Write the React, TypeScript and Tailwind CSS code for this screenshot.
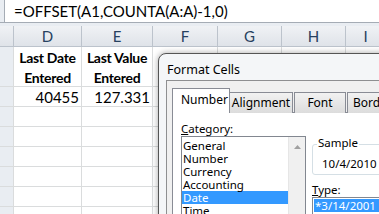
import React from "react";

const cols = ["", "D", "E", "F", "G", "H", "I"];
const widths = "14px 68px 71px 65px 64px 64px 40px";

export default function App() {
  const rows = 7;
  return (
    <div className="relative w-[379px] h-[214px] overflow-hidden bg-white" style={{ fontFamily: "Lato, 'Liberation Sans', sans-serif" }}>
      {/* formula bar */}
      <div className="flex h-[23px] bg-[#e9edf2] border-b border-[#a5acb5]">
        <div className="w-[5px] border-r border-[#a5acb5]" />
        <div className="flex-1 bg-white pl-[9px] text-[15px] leading-[22px] text-black">=OFFSET(A1,COUNTA(A:A)-1,0)</div>
      </div>
      <div className="h-[3px] bg-[#e9edf2]" />
      {/* grid */}
      <div className="grid" style={{ gridTemplateColumns: widths }}>
        {cols.map((c, i) => (
          <div key={"h" + i} className="h-[21px] bg-gradient-to-b from-[#f0f2f5] to-[#dfe3e9] border-r border-b border-[#bcc3cc] text-center text-[15px] leading-[21px] text-[#27415f]">{c}</div>
        ))}
        {cols.map((c, i) => (
          <div key={"r1" + i} className={`h-[40px] border-r border-b border-[#dadcdd] ${i === 0 ? "bg-[#e9edf2] border-[#bcc3cc]" : ""} text-center font-bold text-[14px] tracking-[-0.3px] leading-[20px] pt-[1px] text-black`}>
            {i === 1 && (<><div>Last Date</div><div>Entered</div></>)}
            {i === 2 && (<><div>Last Value</div><div>Entered</div></>)}
          </div>
        ))}
        {cols.map((c, i) => (
          <div key={"r2" + i} className={`h-[20px] border-r border-b border-[#dadcdd] ${i === 0 ? "bg-[#e9edf2] border-[#bcc3cc]" : ""} text-right pr-[2px] text-[15px] leading-[20px] text-black`}>
            {i === 1 && "40455"}
            {i === 2 && "127.331"}
          </div>
        ))}
        {Array.from({ length: rows }).map((_, r) =>
          cols.map((c, i) => (
            <div key={`g${r}-${i}`} className={`h-[20px] border-r border-b border-[#dadcdd] ${i === 0 ? "bg-[#e9edf2] border-[#bcc3cc]" : ""}`} />
          ))
        )}
      </div>

      {/* dialog */}
      <div className="absolute left-[158px] top-[53px] w-[240px] h-[180px] rounded-tl-[8px] border border-[#555] bg-[#f4f6f8] shadow-[0_0_6px_rgba(0,0,0,0.35)]" style={{ fontFamily: "'Noto Sans', 'Open Sans', sans-serif" }}>
        <div className="h-[26px] pl-[8px] pt-[8px] text-[12.5px] leading-[16px] text-black">Format Cells</div>
        <div className="ml-[7px] h-[160px] border border-[#8e8f91] bg-[#f0f0f0] pt-[7px] pl-[5px]">
          {/* tabs */}
          <div className="flex items-end h-[25px] text-[12px] leading-[14px] text-black">
            <div className="relative z-10 h-[25px] w-[58px] border border-b-0 border-[#898c95] bg-white pl-[8px] pt-[4px]">Number</div>
            <div className="h-[21px] w-[63px] border border-l-0 border-b-0 border-[#898c95] bg-gradient-to-b from-[#f2f2f2] to-[#dcdcdc] text-center pt-[3px]">Alignment</div>
            <div className="ml-[1px] h-[21px] w-[52px] border border-b-0 border-[#898c95] bg-gradient-to-b from-[#f2f2f2] to-[#dcdcdc] text-center pt-[3px]">Font</div>
            <div className="ml-[1px] h-[21px] w-[40px] border border-r-0 border-b-0 border-[#898c95] bg-gradient-to-b from-[#f2f2f2] to-[#dcdcdc] pl-[5px] pt-[3px]">Border</div>
          </div>
          <div className="-mt-px h-[140px] border border-[#898c95] bg-white pl-[8px] text-[11.5px] leading-[13px] text-black">
            <div className="flex">
              <div className="w-[131px]">
                <div className="mt-[9px] h-[14px]"><span className="underline">C</span>ategory:</div>
                <div className="flex h-[90px] w-[125px] border border-[#828790]">
                  <div className="flex-1 pt-[2px]">
                    {["General", "Number", "Currency", "Accounting", "Date", "Time"].map((t) => (
                      <div key={t} className={`h-[13px] pl-[1px] ${t === "Date" ? "bg-[#3399ff] text-white" : ""}`}>{t}</div>
                    ))}
                  </div>
                  <div className="w-[17px] bg-[#f0f0f0] border-l border-[#e6e6e6] flex justify-center pt-[8px]">
                    <svg width="7" height="4" viewBox="0 0 7 4"><path d="M0 4 L3.5 0 L7 4 Z" fill="#a0a0a0" /></svg>
                  </div>
                </div>
              </div>
              <div className="flex-1">
                <div className="relative mt-[31px] h-[31px] rounded-[3px] border border-[#d5dfe5]">
                  <div className="absolute left-[4px] -top-[9px] bg-white px-[1px] leading-[14px]">Sample</div>
                  <div className="pl-[9px] pt-[12px]">10/4/2010</div>
                </div>
                <div className="mt-[8px] h-[14px]"><span className="underline">T</span>ype:</div>
                <div className="h-[40px] border border-[#828790] pt-[1px] pl-[1px]">
                  <div className="h-[13px] bg-[#3399ff] text-white pl-[1px]">*3/14/2001</div>
                </div>
              </div>
            </div>
          </div>
        </div>
      </div>
    </div>
  );
}
